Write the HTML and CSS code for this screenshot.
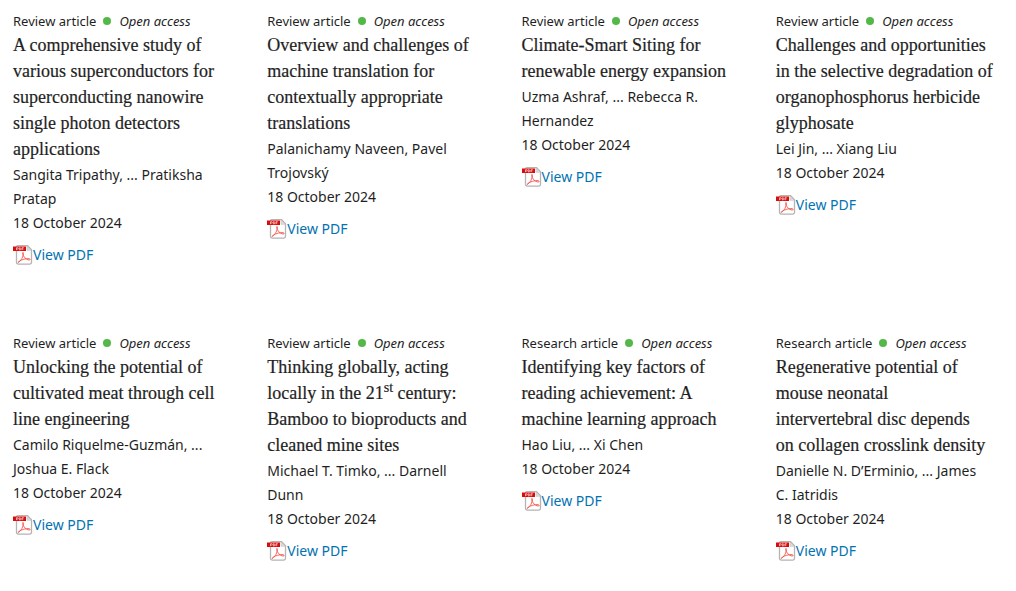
FILE: index.html
```html
<!DOCTYPE html>
<html lang="en">
<head>
<meta charset="utf-8">
<title>Articles</title>
<link rel="stylesheet" href="styles.css">
</head>
<body>
<svg class="sprite" aria-hidden="true">
  <symbol id="pdf" viewBox="0 0 20 20">
    <path d="M4.800 .7h9.700l4 4v12.600a1.800 1.800 0 0 1-1.800 1.800H5.300a1.800 1.800 0 0 1-1.800-1.800V2a1.300 1.300 0 0 1 1.300-1.300z" fill="#fff" stroke="#b4b4b4" stroke-width="1.300"/>
    <path d="M14 1v4.300h4.300z" fill="#ddd" stroke="#c0c0c0" stroke-width=".6"/>
    <path d="M5.800 17.300c2.300-1.800 4.400-5.500 4.700-8.800.1-1.500-1.200-1.500-.9 0 .6 3 3.200 6.200 6.400 6.600 1.400.1 1.500-1.300 0-1.500-3.300-.2-7 .900-10 2.700-1 .6-1.200 1.500-.2 1z" fill="none" stroke="#f4564c" stroke-width=".9" stroke-linejoin="round"/>
    <path d="M0 1.500h13v4.500H0z" fill="#d90b0b"/>
    <path d="M3.500 5.200V2.700h1q.8 0 .8.700t-.8.700h-1M6.300 2.700v2.300h.6q1 0 1-1.150t-1-1.150zM9 5.200V2.700h1.800M9 4h1.400" fill="none" stroke="#fff" stroke-width=".6"/>
  </symbol>
</svg>
<main class="articles">
  <article class="card">
    <p class="meta">Review article<span class="dot"></span><em>Open access</em></p>
    <h2 class="title">A comprehensive study of various superconductors for superconducting nanowire single photon detectors applications</h2>
    <p class="detail">Sangita Tripathy, ... Pratiksha Pratap</p>
    <p class="detail">18 October 2024</p>
    <a class="pdf" href="#"><svg class="icon" aria-hidden="true"><use href="#pdf"/></svg>View PDF</a>
  </article>
  <article class="card">
    <p class="meta">Review article<span class="dot"></span><em>Open access</em></p>
    <h2 class="title">Overview and challenges of machine translation for contextually appropriate translations</h2>
    <p class="detail">Palanichamy Naveen, Pavel Trojovský</p>
    <p class="detail">18 October 2024</p>
    <a class="pdf" href="#"><svg class="icon" aria-hidden="true"><use href="#pdf"/></svg>View PDF</a>
  </article>
  <article class="card">
    <p class="meta">Review article<span class="dot"></span><em>Open access</em></p>
    <h2 class="title">Climate-Smart Siting for renewable energy expansion</h2>
    <p class="detail">Uzma Ashraf, ... Rebecca R. Hernandez</p>
    <p class="detail">18 October 2024</p>
    <a class="pdf" href="#"><svg class="icon" aria-hidden="true"><use href="#pdf"/></svg>View PDF</a>
  </article>
  <article class="card">
    <p class="meta">Review article<span class="dot"></span><em>Open access</em></p>
    <h2 class="title">Challenges and opportunities in the selective degradation of organophosphorus herbicide glyphosate</h2>
    <p class="detail">Lei Jin, ... Xiang Liu</p>
    <p class="detail">18 October 2024</p>
    <a class="pdf" href="#"><svg class="icon" aria-hidden="true"><use href="#pdf"/></svg>View PDF</a>
  </article>
  <article class="card">
    <p class="meta">Review article<span class="dot"></span><em>Open access</em></p>
    <h2 class="title">Unlocking the potential of cultivated meat through cell line engineering</h2>
    <p class="detail">Camilo Riquelme-Guzmán, ... Joshua E. Flack</p>
    <p class="detail">18 October 2024</p>
    <a class="pdf" href="#"><svg class="icon" aria-hidden="true"><use href="#pdf"/></svg>View PDF</a>
  </article>
  <article class="card">
    <p class="meta">Review article<span class="dot"></span><em>Open access</em></p>
    <h2 class="title">Thinking globally, acting locally in the 21<sup>st</sup> century: Bamboo to bioproducts and cleaned mine sites</h2>
    <p class="detail">Michael T. Timko, ... Darnell Dunn</p>
    <p class="detail">18 October 2024</p>
    <a class="pdf" href="#"><svg class="icon" aria-hidden="true"><use href="#pdf"/></svg>View PDF</a>
  </article>
  <article class="card">
    <p class="meta">Research article<span class="dot"></span><em>Open access</em></p>
    <h2 class="title">Identifying key factors of reading achievement: A machine learning approach</h2>
    <p class="detail">Hao Liu, ... Xi Chen</p>
    <p class="detail">18 October 2024</p>
    <a class="pdf" href="#"><svg class="icon" aria-hidden="true"><use href="#pdf"/></svg>View PDF</a>
  </article>
  <article class="card">
    <p class="meta">Research article<span class="dot"></span><em>Open access</em></p>
    <h2 class="title">Regenerative potential of mouse neonatal<br>intervertebral disc depends<br>on collagen crosslink density</h2>
    <p class="detail">Danielle N. D’Erminio, ... James C. Iatridis</p>
    <p class="detail">18 October 2024</p>
    <a class="pdf" href="#"><svg class="icon" aria-hidden="true"><use href="#pdf"/></svg>View PDF</a>
  </article>
</main>
</body>
</html>
```
FILE: styles.css
```css
body {
  margin: 0;
  background: #fff;
  color: #1f1f1f;
  font: 14px/24px "Noto Sans", sans-serif;
}

.sprite {
  position: absolute;
  width: 0;
  height: 0;
}

.articles {
  display: grid;
  grid-template-columns: repeat(4, minmax(0, 1fr));
  gap: 64px 32px;
  padding: 9px 18px 24px 13px;
}

.meta,
.title,
.detail {
  margin: 0;
}

.meta {
  display: flex;
  align-items: center;
  font-size: 13px;
}

.dot {
  width: 8px;
  height: 8px;
  margin: 0 8px 0 7px;
  border-radius: 50%;
  background: #53b848;
}

.title {
  margin: -1px 0 1px;
  font: 400 18px/26px "Liberation Serif", serif;
  -webkit-text-stroke: 0.2px currentColor;
}

.title sup {
  font-size: 14px;
  line-height: 0;
}

.detail {
  padding-right: 14px;
}

.pdf {
  display: flex;
  align-items: center;
  margin-top: 8px;
  color: #0272b1;
  text-decoration: none;
}

.icon {
  flex: none;
  width: 20px;
  height: 20px;
}
```
